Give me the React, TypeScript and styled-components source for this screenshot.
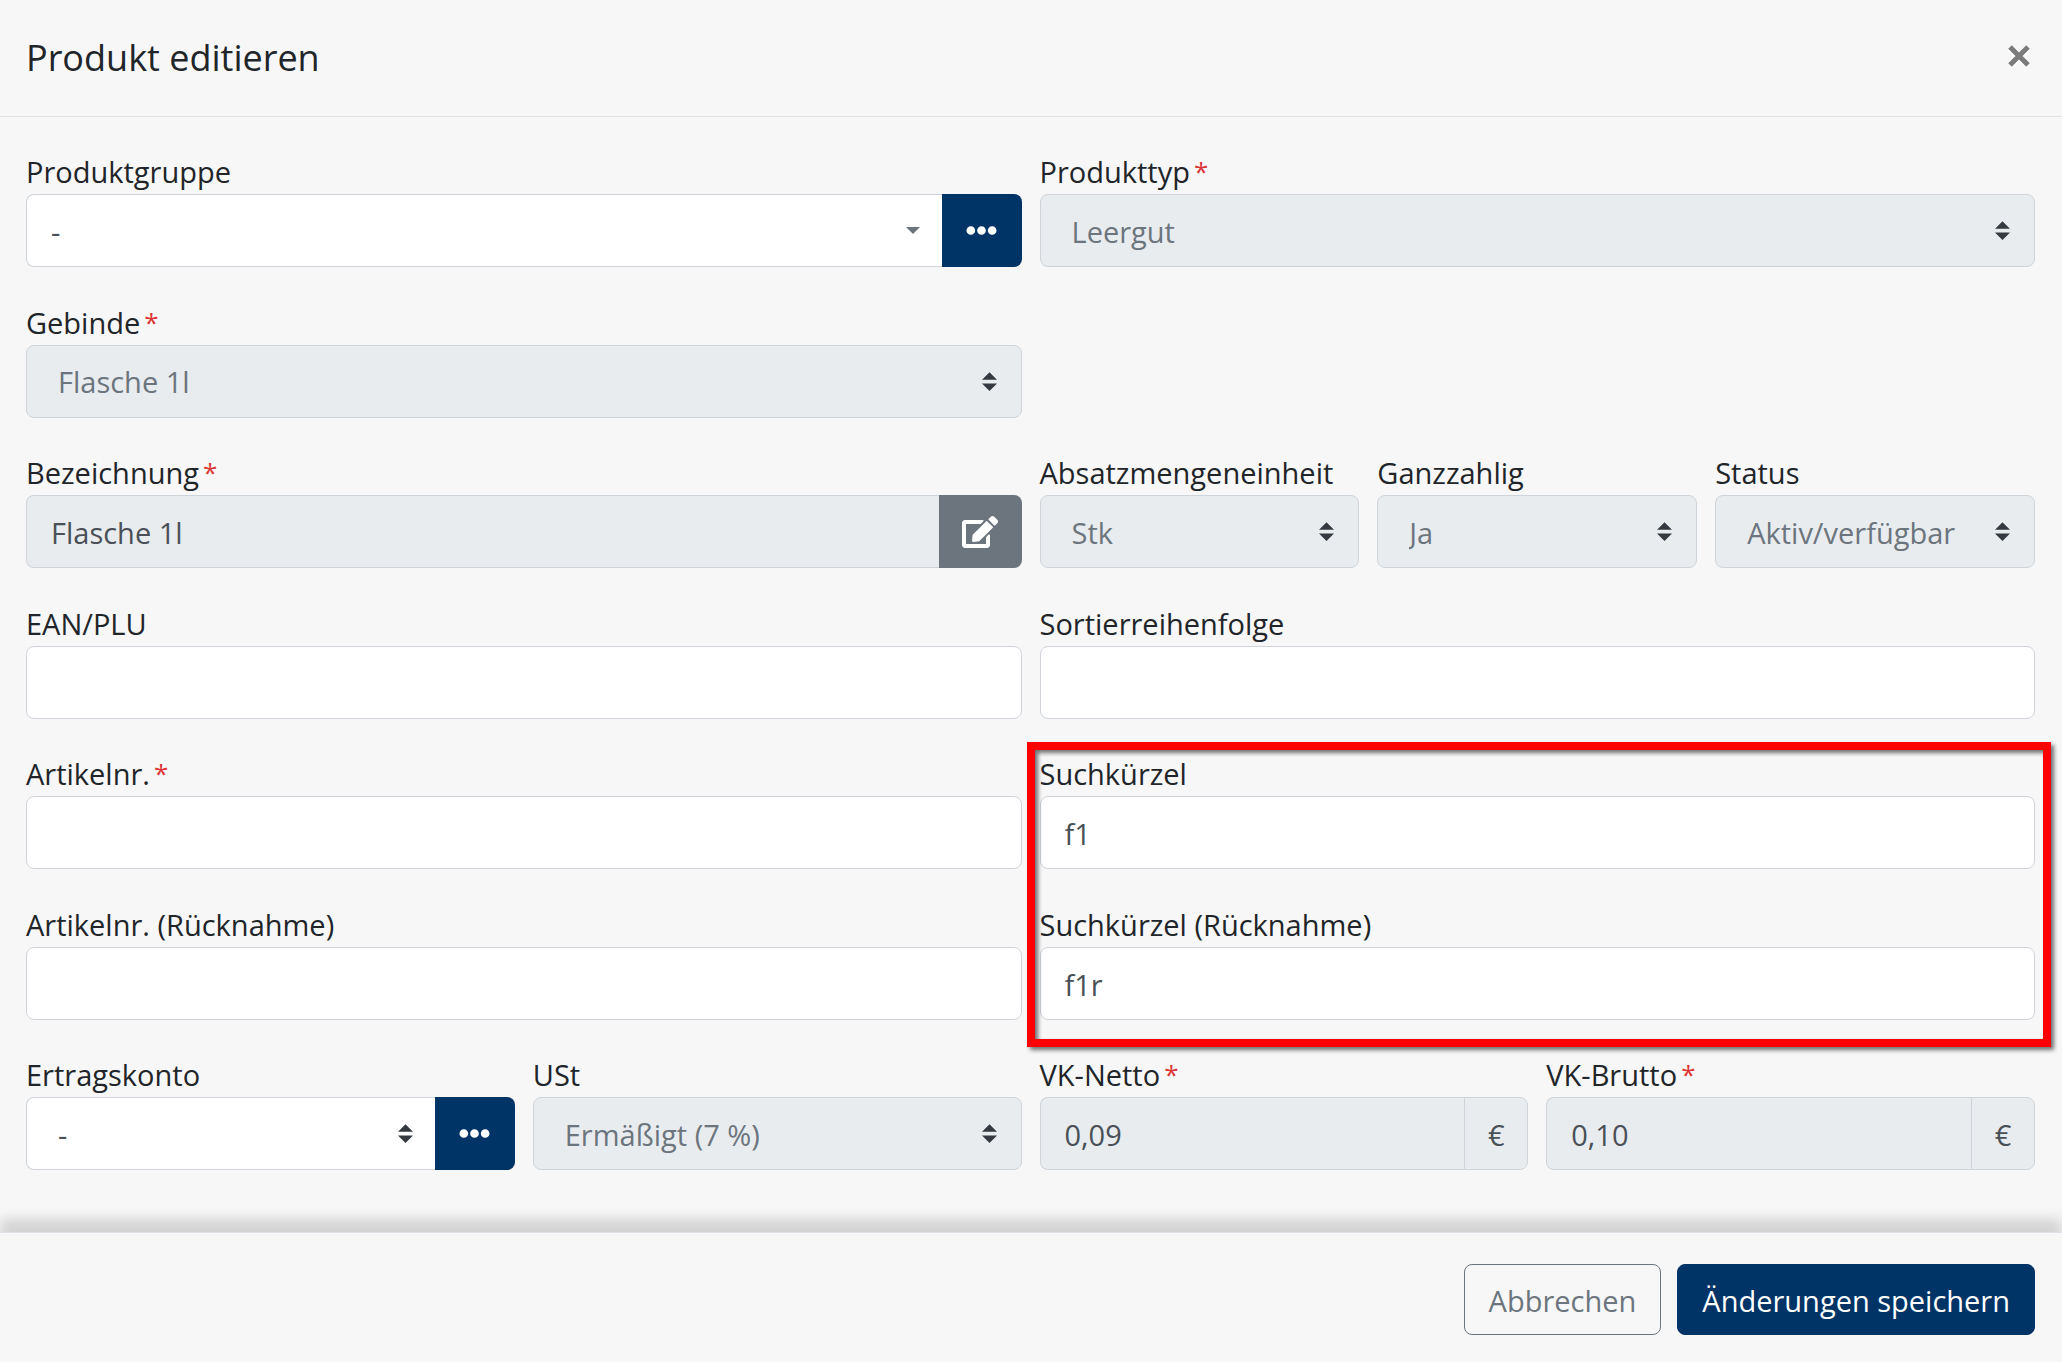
import React, { ReactNode, useId } from "react";
import styled, { createGlobalStyle, css } from "styled-components";
import { FaEdit, FaEllipsisH } from "react-icons/fa";

const color = {
  surface: "#f7f7f7",
  text: "#212529",
  fieldText: "#495057",
  muted: "#6c757d",
  border: "#ced4da",
  divider: "#dee2e6",
  disabled: "#e9ecef",
  primary: "#003366",
  required: "#dc3535",
  marker: "#ff0000",
};

const sorterArrow =
  "url(\"data:image/svg+xml,%3Csvg xmlns='http://www.w3.org/2000/svg' viewBox='0 0 4 5'%3E%3Cpath fill='%23343a40' d='M2 0L0 2h4zm0 5L0 3h4z'/%3E%3C/svg%3E\")";
const caretArrow =
  "url(\"data:image/svg+xml,%3Csvg xmlns='http://www.w3.org/2000/svg' viewBox='0 0 14 7'%3E%3Cpath fill='%236c757d' d='M0 0h14L7 7z'/%3E%3C/svg%3E\")";

const GlobalStyle = createGlobalStyle`
  *, *::before, *::after { box-sizing: border-box; }
  body {
    margin: 0;
    background: ${color.surface};
    color: ${color.text};
    font-family: "Segoe UI", "Open Sans", "Noto Sans", sans-serif;
    font-size: 29px;
    line-height: 44px;
  }
  button, input, select { font: inherit; }
`;

const Dialog = styled.form`
  display: flex;
  flex-direction: column;
  min-height: 100vh;
`;

const Header = styled.header`
  display: flex;
  align-items: flex-start;
  justify-content: space-between;
  padding: 30px 27px 30px 26px;
  border-bottom: 1px solid ${color.divider};
`;

const Title = styled.h1`
  margin: 0;
  font-size: 36px;
  font-weight: 400;
  line-height: 56px;
`;

const CloseButton = styled.button`
  display: flex;
  padding: 14px 4px;
  border: 0;
  background: none;
  color: #7b7b7b;
  cursor: pointer;
  filter: drop-shadow(0 2px 0 #fff);
`;

const Fields = styled.div`
  flex: 1;
  display: grid;
  grid-template-columns: repeat(12, minmax(0, 1fr));
  column-gap: 18px;
  align-content: space-between;
  padding: 33px 27px 62px 26px;
`;

const FieldCell = styled.div<{ $column: number; $span: number; $row: number }>`
  grid-row: ${(p) => p.$row};
  grid-column: ${(p) => p.$column} / span ${(p) => p.$span};
`;

const Label = styled.label`
  display: block;
  white-space: nowrap;
`;

const Required = styled.span`
  margin-left: 4px;
  color: ${color.required};
  font-size: 26px;
  line-height: 1;
  vertical-align: 2px;
`;

const InputGroup = styled.div`
  display: flex;
`;

const controlBase = css<{ $joined?: boolean }>`
  flex: 1;
  display: block;
  width: 100%;
  min-width: 0;
  height: 73px;
  border: 1px solid ${color.border};
  border-radius: ${(p) => (p.$joined ? "8px 0 0 8px" : "8px")};
  border-right-width: ${(p) => (p.$joined ? "0" : "1px")};
  background-color: #fff;
  color: ${color.fieldText};
  outline-color: ${color.primary};
  &:disabled {
    background-color: ${color.disabled};
    opacity: 1;
  }
`;

const TextInput = styled.input<{ $joined?: boolean }>`
  ${controlBase}
  padding: 2px 24px 0;
`;

const Select = styled.select<{ $joined?: boolean; $caret?: boolean }>`
  ${controlBase}
  appearance: none;
  padding: 2px 50px 0 ${(p) => (p.$caret ? "24px" : "31px")};
  background-image: ${(p) => (p.$caret ? caretArrow : sorterArrow)};
  background-repeat: no-repeat;
  background-position: right ${(p) => (p.$joined ? "22px" : "24px")} center;
  background-size: ${(p) => (p.$caret ? "14px 7px" : "15px 19px")};
  &:disabled {
    color: ${color.muted};
  }
`;

const AddonButton = styled.button<{ $tone: "primary" | "muted" }>`
  display: flex;
  align-items: center;
  justify-content: center;
  width: ${(p) => (p.$tone === "primary" ? "80px" : "83px")};
  padding: 0;
  border: 0;
  border-radius: 0 8px 8px 0;
  background: ${(p) => color[p.$tone]};
  color: #fff;
  font-size: ${(p) => (p.$tone === "primary" ? "31px" : "36px")};
  cursor: pointer;
`;

const Unit = styled.span`
  display: flex;
  align-items: center;
  justify-content: center;
  width: 64px;
  padding-top: 2px;
  border: 1px solid ${color.border};
  border-radius: 0 8px 8px 0;
  background: ${color.disabled};
  color: ${color.fieldText};
`;

/* Frame laid over the two search-code fields, reaching into the gutters. */
const Marker = styled.div`
  grid-row: 5 / span 2;
  grid-column: 7 / -1;
  z-index: 1;
  margin: -10px -16px -27px -13px;
  border: 8px solid ${color.marker};
  filter: drop-shadow(3px 3px 2px rgba(0, 0, 0, 0.55));
  pointer-events: none;
`;

const Footer = styled.footer`
  display: flex;
  justify-content: flex-end;
  gap: 16px;
  padding: 31px 27px 27px;
  border-top: 1px solid ${color.divider};
  background: ${color.surface};
  box-shadow: 0 -13px 12px rgba(0, 0, 0, 0.15);
`;

const ActionButton = styled.button<{ $primary?: boolean }>`
  height: 71px;
  padding: 2px 24px 0;
  border: 1px solid ${(p) => (p.$primary ? color.primary : color.muted)};
  border-radius: 8px;
  background: ${(p) => (p.$primary ? color.primary : "transparent")};
  color: ${(p) => (p.$primary ? "#fff" : color.muted)};
  cursor: pointer;
`;

interface FieldProps {
  label: string;
  row: number;
  column: number;
  span: number;
  required?: boolean;
  children: (id: string) => ReactNode;
}

function Field({ label, row, column, span, required, children }: FieldProps) {
  const id = useId();
  return (
    <FieldCell $row={row} $column={column} $span={span}>
      <Label htmlFor={id}>
        {label}
        {required && <Required>*</Required>}
      </Label>
      <InputGroup>{children(id)}</InputGroup>
    </FieldCell>
  );
}

interface ValueFieldProps extends Omit<FieldProps, "children"> {
  value: string;
}

function LockedSelect({ value, ...field }: ValueFieldProps) {
  return (
    <Field {...field}>
      {(id) => (
        <Select id={id} disabled>
          <option>{value}</option>
        </Select>
      )}
    </Field>
  );
}

function TextField({ value, ...field }: ValueFieldProps) {
  return <Field {...field}>{(id) => <TextInput id={id} type="text" defaultValue={value} />}</Field>;
}

function PriceField({ value, ...field }: ValueFieldProps) {
  return (
    <Field {...field}>
      {(id) => (
        <>
          <TextInput id={id} type="text" defaultValue={value} disabled $joined />
          <Unit>€</Unit>
        </>
      )}
    </Field>
  );
}

function PickerField({ caret, ...field }: Omit<FieldProps, "children"> & { caret?: boolean }) {
  return (
    <Field {...field}>
      {(id) => (
        <>
          <Select id={id} $joined $caret={caret}>
            <option>-</option>
          </Select>
          <AddonButton type="button" $tone="primary" aria-label={field.label}>
            <FaEllipsisH />
          </AddonButton>
        </>
      )}
    </Field>
  );
}

export default function App() {
  return (
    <>
      <GlobalStyle />
      <Dialog onSubmit={(e) => e.preventDefault()}>
        <Header>
          <Title>Produkt editieren</Title>
          <CloseButton type="button" aria-label="Schließen">
            <svg width="24" height="24" viewBox="0 0 24 24" fill="none">
              <path d="M3 3l18 18M21 3l-18 18" stroke="currentColor" strokeWidth="5" />
            </svg>
          </CloseButton>
        </Header>

        <Fields>
          <PickerField row={1} column={1} span={6} label="Produktgruppe" caret />
          <LockedSelect row={1} column={7} span={6} label="Produkttyp" required value="Leergut" />

          <LockedSelect row={2} column={1} span={6} label="Gebinde" required value="Flasche 1l" />

          <Field row={3} column={1} span={6} label="Bezeichnung" required>
            {(id) => (
              <>
                <TextInput id={id} type="text" defaultValue="Flasche 1l" disabled $joined />
                <AddonButton type="button" $tone="muted" aria-label="Bezeichnung">
                  <FaEdit />
                </AddonButton>
              </>
            )}
          </Field>
          <LockedSelect row={3} column={7} span={2} label="Absatzmengeneinheit" value="Stk" />
          <LockedSelect row={3} column={9} span={2} label="Ganzzahlig" value="Ja" />
          <LockedSelect row={3} column={11} span={2} label="Status" value="Aktiv/verfügbar" />

          <TextField row={4} column={1} span={6} label="EAN/PLU" value="" />
          <TextField row={4} column={7} span={6} label="Sortierreihenfolge" value="" />

          <TextField row={5} column={1} span={6} label="Artikelnr." required value="" />
          <TextField row={5} column={7} span={6} label="Suchkürzel" value="f1" />

          <TextField row={6} column={1} span={6} label="Artikelnr. (Rücknahme)" value="" />
          <TextField row={6} column={7} span={6} label="Suchkürzel (Rücknahme)" value="f1r" />

          <PickerField row={7} column={1} span={3} label="Ertragskonto" />
          <LockedSelect row={7} column={4} span={3} label="USt" value="Ermäßigt (7 %)" />
          <PriceField row={7} column={7} span={3} label="VK-Netto" required value="0,09" />
          <PriceField row={7} column={10} span={3} label="VK-Brutto" required value="0,10" />

          <Marker />
        </Fields>

        <Footer>
          <ActionButton type="button">Abbrechen</ActionButton>
          <ActionButton type="submit" $primary>
            Änderungen speichern
          </ActionButton>
        </Footer>
      </Dialog>
    </>
  );
}
